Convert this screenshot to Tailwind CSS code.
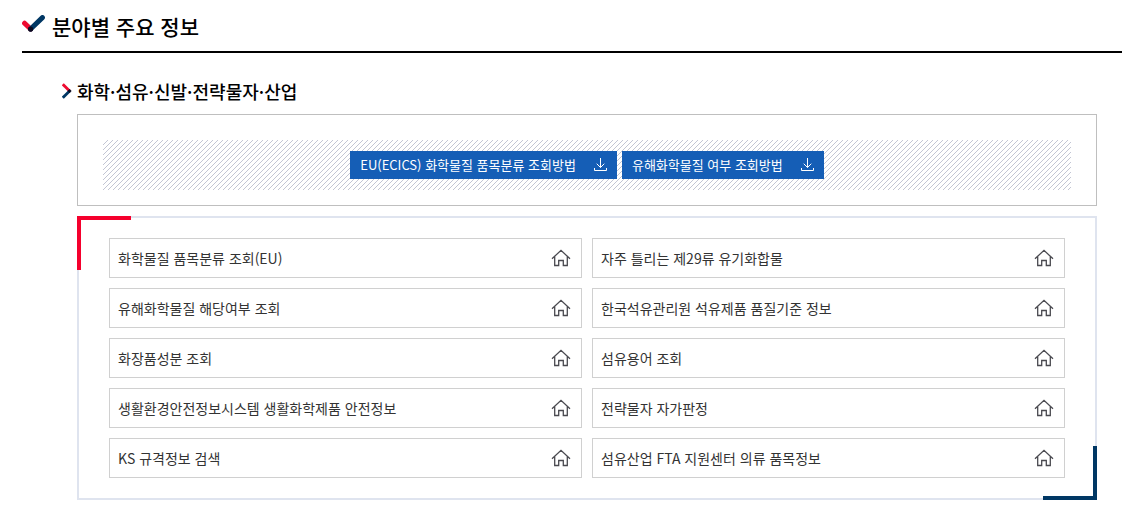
<!DOCTYPE html>
<html lang="ko">
<head>
  <meta charset="UTF-8" />
  <meta name="viewport" content="width=device-width, initial-scale=1.0" />
  <title>분야별 주요 정보</title>
  <script src="https://cdn.jsdelivr.net/npm/@tailwindcss/browser@4"></script>
</head>
<body class="bg-white text-black font-['Noto_Sans_CJK_KR',sans-serif]">
  <!-- shared icons -->
  <svg class="hidden" aria-hidden="true">
    <symbol id="home" viewBox="0 0 20 18">
      <path d="M1 9.8 10 1.3l9 8.5M3.7 7.8v8.7h4v-5h4.6v5h4V7.8" fill="none" stroke="currentColor" stroke-width="1.3" />
    </symbol>
    <symbol id="download" viewBox="0 0 13 14">
      <path d="M6.5 0v9.5M2.7 5.7l3.8 3.8 3.8-3.8M.5 10v2.5h12V10" fill="none" stroke="currentColor" />
    </symbol>
  </svg>

  <main class="pl-[22px] pr-[19px]">
    <header class="flex items-center gap-[7px] h-[53px] border-b-2 border-black">
      <svg class="w-[23px] h-[18px] -mt-1" viewBox="0 0 23 18" fill="none" stroke-width="5" stroke-linecap="round" aria-hidden="true">
        <path d="M2.6 8.2 8.6 14" stroke="#ee0a30" />
        <path d="M8.6 14 20.4 2.6" stroke="#003764" />
        <circle cx="8.6" cy="14" r="2.6" fill="#0a0a20" />
      </svg>
      <h1 class="text-[21px] leading-[30px] font-medium">분야별 주요 정보</h1>
    </header>

    <section class="pl-10 pr-[25px] pt-6 pb-2">
      <div class="flex items-center gap-[5px] h-7">
        <svg class="w-[10px] h-4" viewBox="0 0 10 16" fill="none" stroke-width="2.8" aria-hidden="true">
          <path d="M.8 1.2 7.6 8" stroke="#ee0a30" />
          <path d="M7.6 8 .8 14.8" stroke="#003764" />
          <path d="M7.6 6 9.6 8 7.6 10 5.6 8Z" fill="#0a0a20" />
        </svg>
        <h2 class="text-[18px] leading-7 font-medium">화학·섬유·신발·전략물자·산업</h2>
      </div>

      <div class="ml-[15px] mt-[9px] border border-[#bfbfbf] px-[25px] pt-[25px] pb-[15px]">
        <div class="relative h-[50px] flex items-center justify-center gap-[5px]">
          <svg class="absolute inset-0 w-full h-full" shape-rendering="crispEdges" aria-hidden="true">
            <pattern id="hatch" width="5" height="5" patternUnits="userSpaceOnUse">
              <path d="M4 0h1v1H4zM3 1h1v1H3zM2 2h1v1H2zM1 3h1v1H1zM0 4h1v1H0z" fill="#c3c6d4" />
            </pattern>
            <rect width="100%" height="100%" fill="url(#hatch)" />
          </svg>
          <button type="button" class="relative flex items-center gap-[18px] h-7 px-[10px] bg-[#155eb6] text-white text-[13px] leading-7">
            EU(ECICS) 화학물질 품목분류 조회방법
            <svg class="w-[13px] h-[14px]" aria-hidden="true"><use href="#download" /></svg>
          </button>
          <button type="button" class="relative flex items-center gap-[18px] h-7 px-[10px] bg-[#155eb6] text-white text-[13px] leading-7">
            유해화학물질 여부 조회방법
            <svg class="w-[13px] h-[14px]" aria-hidden="true"><use href="#download" /></svg>
          </button>
        </div>
      </div>

      <div class="relative ml-[15px] mt-[10px] border-2 border-[#dfe4ef] px-[30px] py-5">
        <span class="absolute -top-0.5 -left-0.5 w-[54px] h-[54px] border-t-4 border-l-4 border-[#f5002d]"></span>
        <span class="absolute -bottom-0.5 -right-0.5 w-[54px] h-[54px] border-b-4 border-r-4 border-[#003764]"></span>
        <ul id="linkList" class="grid grid-cols-2 gap-[10px]"></ul>
      </div>
    </section>
  </main>

  <script>
    const links = [
      "화학물질 품목분류 조회(EU)",
      "자주 틀리는 제29류 유기화합물",
      "유해화학물질 해당여부 조회",
      "한국석유관리원 석유제품 품질기준 정보",
      "화장품성분 조회",
      "섬유용어 조회",
      "생활환경안전정보시스템 생활화학제품 안전정보",
      "전략물자 자가판정",
      "KS 규격정보 검색",
      "섬유산업 FTA 지원센터 의류 품목정보"
    ];

    document.getElementById("linkList").innerHTML = links.map(name => `
      <li>
        <a href="#" class="flex items-center justify-between h-10 pl-2 pr-[10px] border border-[#d0d0d0] text-[14px] leading-6 text-[#333]">
          ${name}
          <svg class="w-5 h-[18px] shrink-0 text-[#4a4a50]" aria-hidden="true"><use href="#home" /></svg>
        </a>
      </li>
    `).join("");
  </script>
</body>
</html>
